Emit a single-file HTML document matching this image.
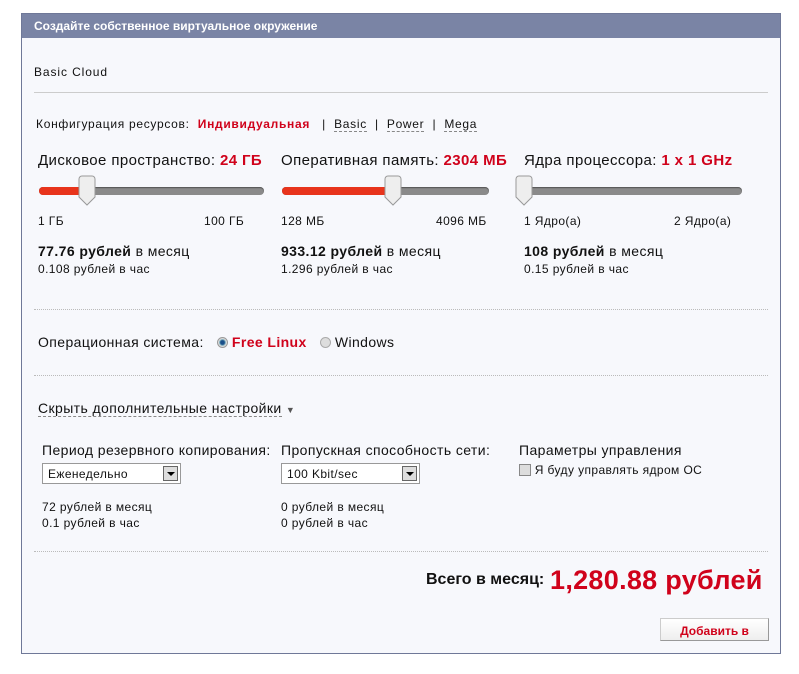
<!DOCTYPE html>
<html><head><meta charset="utf-8"><style>
*{margin:0;padding:0;box-sizing:border-box}
body{width:799px;height:674px;background:#fff;font-family:"Liberation Sans",Arial,sans-serif;color:#111;position:relative;overflow:hidden}
.p{position:absolute;left:21px;top:13px;width:760px;height:641px;border:1px solid #6f7898;background:#f7f8fc}
.h{position:absolute;left:0;top:0;width:100%;height:24px;background:#7a84a5;color:#fff;font-size:12px;font-weight:bold;padding:5px 0 0 12px}
.a{position:absolute;white-space:nowrap;letter-spacing:.4px}
.r{color:#d0021b;font-weight:bold}
.hr{position:absolute;left:12px;width:734px;height:0;border-top:1px solid #ccc}
.dt{position:absolute;left:12px;width:734px;border-top:1px dotted #bbb}
.tr{position:absolute;height:8px;border-radius:4px;background:#8a8a8a;box-shadow:inset 0 1px 1px #555}
.fl{position:absolute;left:0;top:0;height:8px;border-radius:4px;background:#e8341c}
.th{position:absolute;width:18px;height:32px}
.u{border-bottom:1px dashed #888}
.sel{position:absolute;height:21px;border:1px solid #999;background:#fff;font-size:12px;padding:3px 5px;letter-spacing:.4px}
.sel b{position:absolute;right:2px;top:2px;width:15px;height:15px;border:1px solid #666;background:#ddd}
.sel b:after{content:"";position:absolute;left:3px;top:5px;border:4px solid transparent;border-top:4px solid #000}
</style></head><body>
<div class="p">
<div class="h">Создайте собственное виртуальное окружение</div>
<div class="a" style="left:12px;top:51px;font-size:12px;letter-spacing:.9px">Basic Cloud</div>
<div class="hr" style="top:78px"></div>
<div class="a" style="left:14px;top:103px;font-size:12px;letter-spacing:.7px">Конфигурация ресурсов: &nbsp;<span class="r">Индивидуальная</span> &nbsp;&nbsp;| &nbsp;<span class="u">Basic</span> &nbsp;| &nbsp;<span class="u">Power</span> &nbsp;| &nbsp;<span class="u">Mega</span></div>

<div class="a" style="left:16px;top:138px;font-size:15px">Дисковое пространство: <span class="r">24 ГБ</span></div>
<div class="a" style="left:259px;top:138px;font-size:15px">Оперативная память: <span class="r">2304 МБ</span></div>
<div class="a" style="left:502px;top:138px;font-size:15px">Ядра процессора: <span class="r">1 x 1 GHz</span></div>

<div class="tr" style="left:17px;top:173px;width:225px"><div class="fl" style="width:50px"></div></div>
<div class="tr" style="left:260px;top:173px;width:207px"><div class="fl" style="width:110px"></div></div>
<div class="tr" style="left:495px;top:173px;width:225px"></div>
<svg class="th" style="left:56px;top:161px" viewBox="0 0 18 32"><path d="M4 1h10a3 3 0 0 1 3 3v18l-8 8-8-8V4a3 3 0 0 1 3-3z" fill="#eee" stroke="#999"/></svg>
<svg class="th" style="left:362px;top:161px" viewBox="0 0 18 32"><path d="M4 1h10a3 3 0 0 1 3 3v18l-8 8-8-8V4a3 3 0 0 1 3-3z" fill="#eee" stroke="#999"/></svg>
<svg class="th" style="left:493px;top:161px" viewBox="0 0 18 32"><path d="M4 1h10a3 3 0 0 1 3 3v18l-8 8-8-8V4a3 3 0 0 1 3-3z" fill="#eee" stroke="#999"/></svg>

<div class="a" style="left:16px;top:200px;font-size:12px">1 ГБ</div>
<div class="a" style="left:182px;top:200px;font-size:12px">100 ГБ</div>
<div class="a" style="left:259px;top:200px;font-size:12px">128 МБ</div>
<div class="a" style="left:414px;top:200px;font-size:12px">4096 МБ</div>
<div class="a" style="left:502px;top:200px;font-size:12px">1 Ядро(а)</div>
<div class="a" style="left:652px;top:200px;font-size:12px">2 Ядро(а)</div>

<div class="a" style="left:16px;top:229px;font-size:14px"><b>77.76 рублей</b> в месяц</div>
<div class="a" style="left:16px;top:248px;font-size:12px">0.108 рублей в час</div>
<div class="a" style="left:259px;top:229px;font-size:14px"><b>933.12 рублей</b> в месяц</div>
<div class="a" style="left:259px;top:248px;font-size:12px">1.296 рублей в час</div>
<div class="a" style="left:502px;top:229px;font-size:14px"><b>108 рублей</b> в месяц</div>
<div class="a" style="left:502px;top:248px;font-size:12px">0.15 рублей в час</div>

<div class="dt" style="top:295px"></div>
<div class="a" style="left:16px;top:320px;font-size:14px">Операционная система: &nbsp;
<span style="display:inline-block;width:11px;height:11px;border-radius:50%;background:radial-gradient(#1a4f8a 30%,#7ab 45%,#ddd 60%);border:1px solid #999;vertical-align:-1px"></span> <span class="r">Free Linux</span> &nbsp;
<span style="display:inline-block;width:11px;height:11px;border-radius:50%;background:#ddd;border:1px solid #aaa;vertical-align:-1px"></span> Windows</div>
<div class="dt" style="top:361px"></div>
<div class="a" style="left:16px;top:386px;font-size:14px"><span class="u">Скрыть дополнительные настройки</span> <span style="font-size:9px;color:#555">▼</span></div>

<div class="a" style="left:20px;top:428px;font-size:14px">Период резервного копирования:</div>
<div class="a" style="left:259px;top:428px;font-size:14px">Пропускная способность сети:</div>
<div class="a" style="left:497px;top:428px;font-size:14px">Параметры управления</div>
<div class="sel" style="left:20px;top:449px;width:139px">Еженедельно<b></b></div>
<div class="sel" style="left:259px;top:449px;width:139px">100 Kbit/sec<b></b></div>
<div class="a" style="left:497px;top:449px;font-size:12px"><span style="display:inline-block;width:12px;height:12px;border:1px solid #888;background:#ddd;vertical-align:-2px"></span> Я буду управлять ядром ОС</div>

<div class="a" style="left:20px;top:486px;font-size:12px">72 рублей в месяц</div>
<div class="a" style="left:20px;top:502px;font-size:12px">0.1 рублей в час</div>
<div class="a" style="left:259px;top:486px;font-size:12px">0 рублей в месяц</div>
<div class="a" style="left:259px;top:502px;font-size:12px">0 рублей в час</div>

<div class="dt" style="top:537px"></div>
<div class="a" style="left:404px;top:557px;font-size:16px;font-weight:bold;letter-spacing:0">Всего в месяц:</div>
<div class="a r" style="left:528px;top:551px;font-size:27px;letter-spacing:.3px">1,280.88 рублей</div>
<div class="a" style="left:638px;top:604px;width:109px;height:23px;border:1px solid #ccc;border-right-color:#999;border-bottom-color:#999;background:linear-gradient(#fff,#eee);color:#d0021b;font-weight:bold;font-size:12px;text-align:center;padding-top:5px;letter-spacing:0">Добавить в</div>
</div>
</body></html>
